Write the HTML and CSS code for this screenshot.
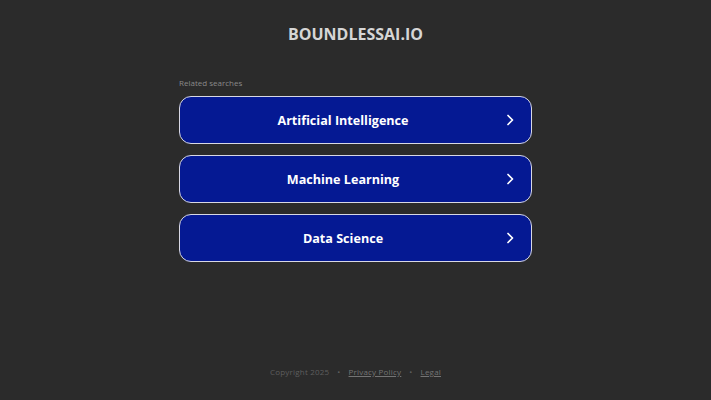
FILE: index.html
```html
<!DOCTYPE html>
<html>
<head>
<meta charset="utf-8">
<link rel="stylesheet" href="styles.css">
</head>
<body>
<div class="page">
  <header class="header"><h1 class="title">BOUNDLESSAI.IO</h1></header>
  <main class="main">
    <div class="related">Related searches</div>
    <div class="list">
      <a class="btn" href="#"><span class="label">Artificial Intelligence</span><svg class="chev" viewBox="0 0 16 16" width="16" height="16"><path d="M6 3.5 L10.5 8 L6 12.5" fill="none" stroke="#fff" stroke-width="1.7" stroke-linecap="round" stroke-linejoin="round"/></svg></a>
      <a class="btn" href="#"><span class="label">Machine Learning</span><svg class="chev" viewBox="0 0 16 16" width="16" height="16"><path d="M6 3.5 L10.5 8 L6 12.5" fill="none" stroke="#fff" stroke-width="1.7" stroke-linecap="round" stroke-linejoin="round"/></svg></a>
      <a class="btn" href="#"><span class="label">Data Science</span><svg class="chev" viewBox="0 0 16 16" width="16" height="16"><path d="M6 3.5 L10.5 8 L6 12.5" fill="none" stroke="#fff" stroke-width="1.7" stroke-linecap="round" stroke-linejoin="round"/></svg></a>
    </div>
  </main>
  <footer class="footer">
    <span>Copyright 2025</span><span class="dot">•</span><a href="#">Privacy Policy</a><span class="dot">•</span><a href="#">Legal</a>
  </footer>
</div>
</body>
</html>
```
FILE: styles.css
```css
html, body {
  margin: 0;
  padding: 0;
  background: #2b2b2b;
  font-family: "Open Sans", "Noto Sans", sans-serif;
}
.page {
  width: 711px;
  height: 400px;
  display: flex;
  flex-direction: column;
  align-items: center;
}
.header {
  padding-top: 23px;
  height: 54px;
  box-sizing: border-box;
}
.title {
  margin: 0;
  font-size: 16px;
  font-weight: 700;
  color: #d6d6d6;
  letter-spacing: 0;
  line-height: 22px;
}
.main {
  width: 353px;
  padding-top: 23px;
}
.related {
  font-size: 8px;
  color: #8a8a8a;
  line-height: 12px;
  margin-bottom: 7px;
}
.list {
  display: flex;
  flex-direction: column;
  gap: 11px;
}
.btn {
  display: flex;
  align-items: center;
  height: 48px;
  box-sizing: border-box;
  border: 1.5px solid #d8d8e4;
  border-radius: 12px;
  background: #051993;
  color: #fff;
  text-decoration: none;
  padding: 0 13px 0 12px;
}
.label {
  flex: 1;
  text-align: center;
  font-size: 12.6px;
  font-weight: 700;
}
.chev {
  margin-left: 8px;
  display: block;
}
.footer {
  margin-top: auto;
  margin-bottom: 23px;
  font-size: 8px;
  color: #5e5e5e;
  display: flex;
  gap: 8px;
  letter-spacing: 0.2px;
}
.footer a {
  color: #747474;
  text-decoration: underline;
}
```
